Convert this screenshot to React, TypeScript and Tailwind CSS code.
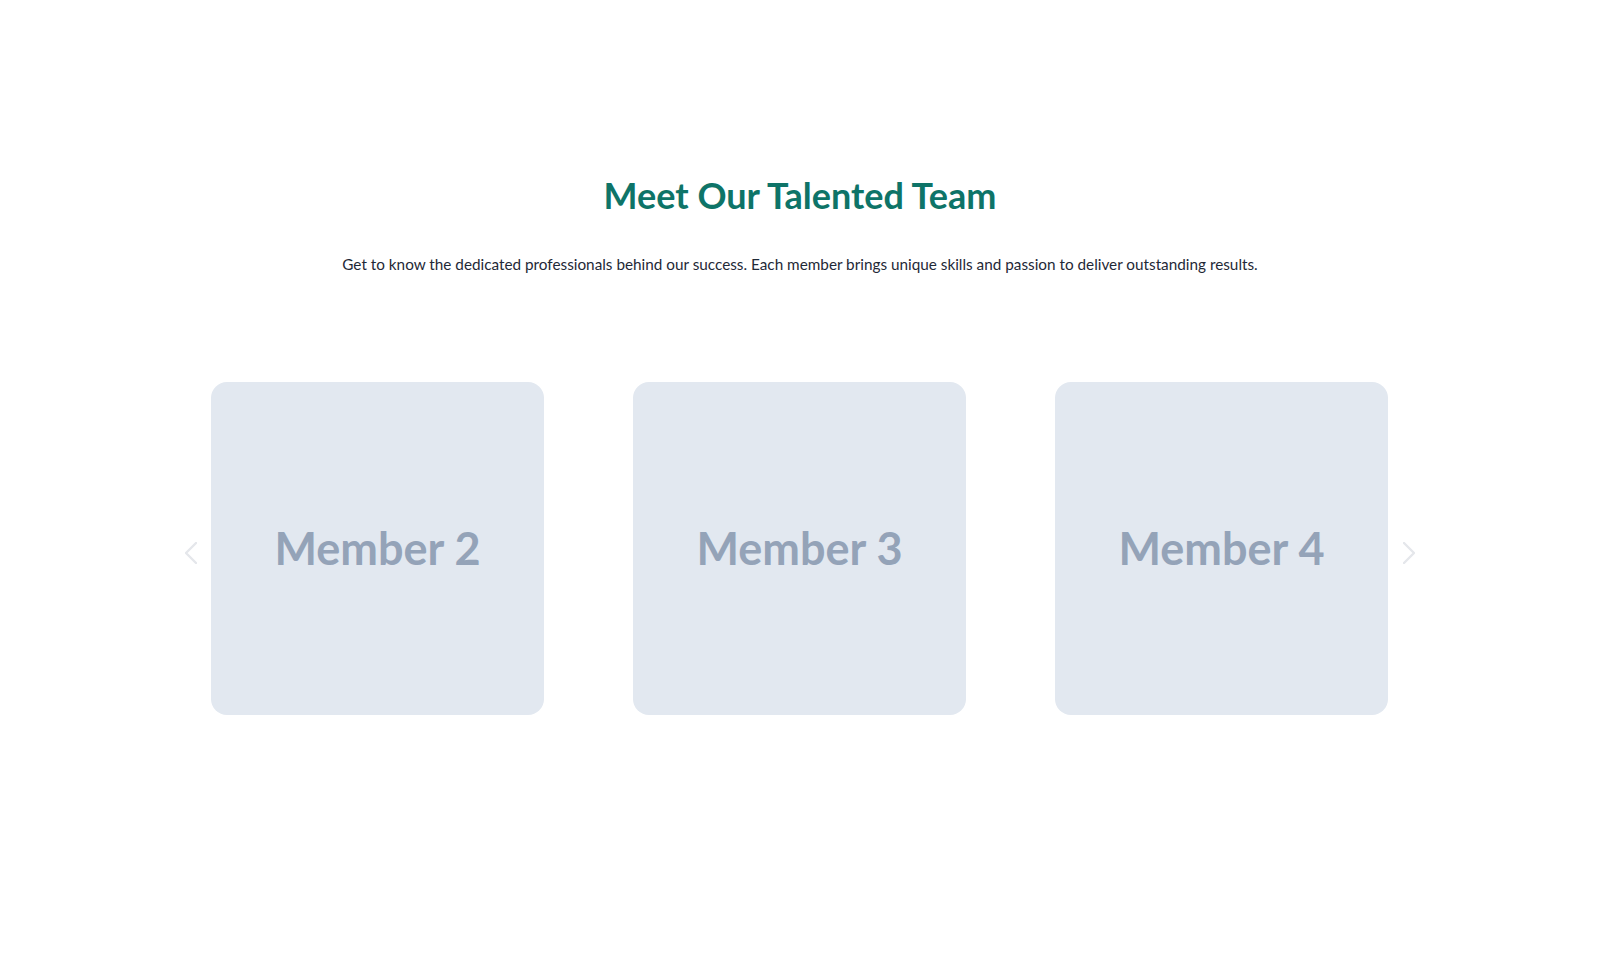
const members = ["Member 2", "Member 3", "Member 4"];

function Chevron({ dir }: { dir: "left" | "right" }) {
  const points = dir === "left" ? "11,1 1,11 11,21" : "1,1 11,11 1,21";
  return (
    <svg width="12" height="22" viewBox="0 0 12 22" fill="none">
      <polyline points={points} stroke="currentColor" strokeWidth="2.4" strokeLinecap="round" strokeLinejoin="round" />
    </svg>
  );
}

function MemberCard({ name }: { name: string }) {
  return (
    <div className="flex h-[333px] w-[333px] shrink-0 items-center justify-center rounded-2xl bg-[#e2e8f0]">
      <span className="font-['Lato',sans-serif] text-[45px] font-bold text-[#94a3b8]">{name}</span>
    </div>
  );
}

export default function App() {
  return (
    <main className="min-h-screen bg-white font-['Lato',sans-serif]">
      <section className="pt-[173px]">
        <h2 className="text-center text-[36px] font-bold leading-[44px] text-[#0e7468]">
          Meet Our Talented Team
        </h2>
        <p className="mt-[35px] text-center text-[15.3px] leading-6 text-[#1f2937]">
          Get to know the dedicated professionals behind our success. Each member brings unique skills and passion to
          deliver outstanding results.
        </p>

        {/* Carousel */}
        <div className="mt-[106px] flex items-center justify-center">
          <button className="mr-[14px] mt-[9px] text-[#e5e7eb]">
            <Chevron dir="left" />
          </button>
          <div className="flex gap-[89px]">
            {members.map((m) => (
              <MemberCard key={m} name={m} />
            ))}
          </div>
          <button className="ml-[15px] mt-[9px] text-[#e5e7eb]">
            <Chevron dir="right" />
          </button>
        </div>
      </section>
    </main>
  );
}
